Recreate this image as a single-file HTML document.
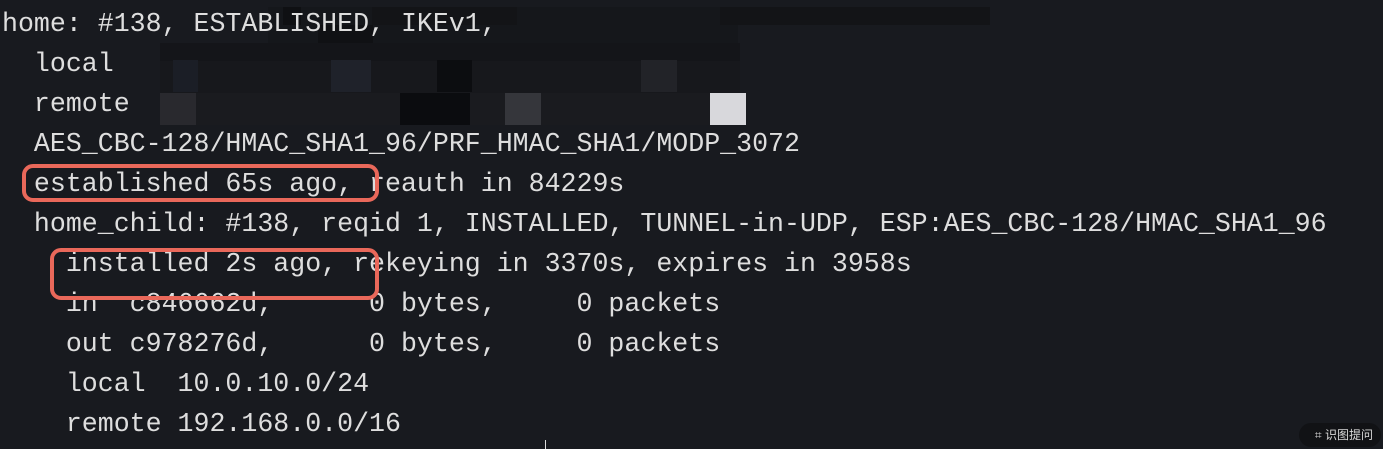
<!DOCTYPE html>
<html><head><meta charset="utf-8"><style>
html,body{margin:0;padding:0;width:1383px;height:449px;overflow:hidden;background:#181a1f;}
pre{margin:0;position:absolute;left:2px;top:4px;font-family:"Liberation Mono","DejaVu Sans Mono",monospace;font-size:26.6px;line-height:40px;color:#dedede;}
.b{position:absolute;}
.box{position:absolute;border:4px solid #e9685a;border-radius:11px;box-sizing:border-box;}
.badge{position:absolute;left:1299px;top:423px;width:82px;height:24px;border-radius:12px;background:#111215;color:#d8d8d8;font:12px "Liberation Sans","Noto Sans CJK SC",sans-serif;line-height:24px;text-align:right;padding-right:8px;box-sizing:border-box;}
</style></head><body>
<div class="b" style="left:268px;top:7px;width:470px;height:36px;background:#15171b"></div>
<div class="b" style="left:283px;top:7px;width:18px;height:18px;background:#0f1013"></div>
<div class="b" style="left:372px;top:7px;width:145px;height:18px;background:#131417"></div>
<div class="b" style="left:318px;top:25px;width:55px;height:18px;background:#101114"></div>
<div class="b" style="left:160px;top:43px;width:580px;height:18px;background:#141519"></div>
<div class="b" style="left:160px;top:61px;width:580px;height:32px;background:#17181c"></div>
<div class="b" style="left:173px;top:60px;width:25px;height:32px;background:#1b1e26"></div>
<div class="b" style="left:331px;top:60px;width:40px;height:32px;background:#1f222a"></div>
<div class="b" style="left:437px;top:60px;width:35px;height:32px;background:#0c0d10"></div>
<div class="b" style="left:641px;top:60px;width:36px;height:32px;background:#222328"></div>
<div class="b" style="left:160px;top:93px;width:550px;height:32px;background:#1a1b1f"></div>
<div class="b" style="left:160px;top:93px;width:36px;height:32px;background:#29292e"></div>
<div class="b" style="left:400px;top:93px;width:70px;height:32px;background:#0b0c0f"></div>
<div class="b" style="left:505px;top:93px;width:36px;height:32px;background:#35363b"></div>
<div class="b" style="left:710px;top:93px;width:36px;height:32px;background:#d8d8dc"></div>
<div class="b" style="left:720px;top:7px;width:270px;height:18px;background:#131417"></div>
<pre>home: #138, ESTABLISHED, IKEv1,
  local
  remote
  AES_CBC-128/HMAC_SHA1_96/PRF_HMAC_SHA1/MODP_3072
  established 65s ago, reauth in 84229s
  home_child: #138, reqid 1, INSTALLED, TUNNEL-in-UDP, ESP:AES_CBC-128/HMAC_SHA1_96
    installed 2s ago, rekeying in 3370s, expires in 3958s
    in  c846662d,      0 bytes,     0 packets
    out c978276d,      0 bytes,     0 packets
    local  10.0.10.0/24
    remote 192.168.0.0/16</pre>
<div class="box" style="left:22px;top:164px;width:357px;height:38px"></div>
<div class="box" style="left:50px;top:248px;width:329px;height:52px"></div>
<div class="b" style="left:545px;top:440px;width:1px;height:9px;background:#ddd"></div>
<div class="badge">⌗ 识图提问</div>
</body></html>
